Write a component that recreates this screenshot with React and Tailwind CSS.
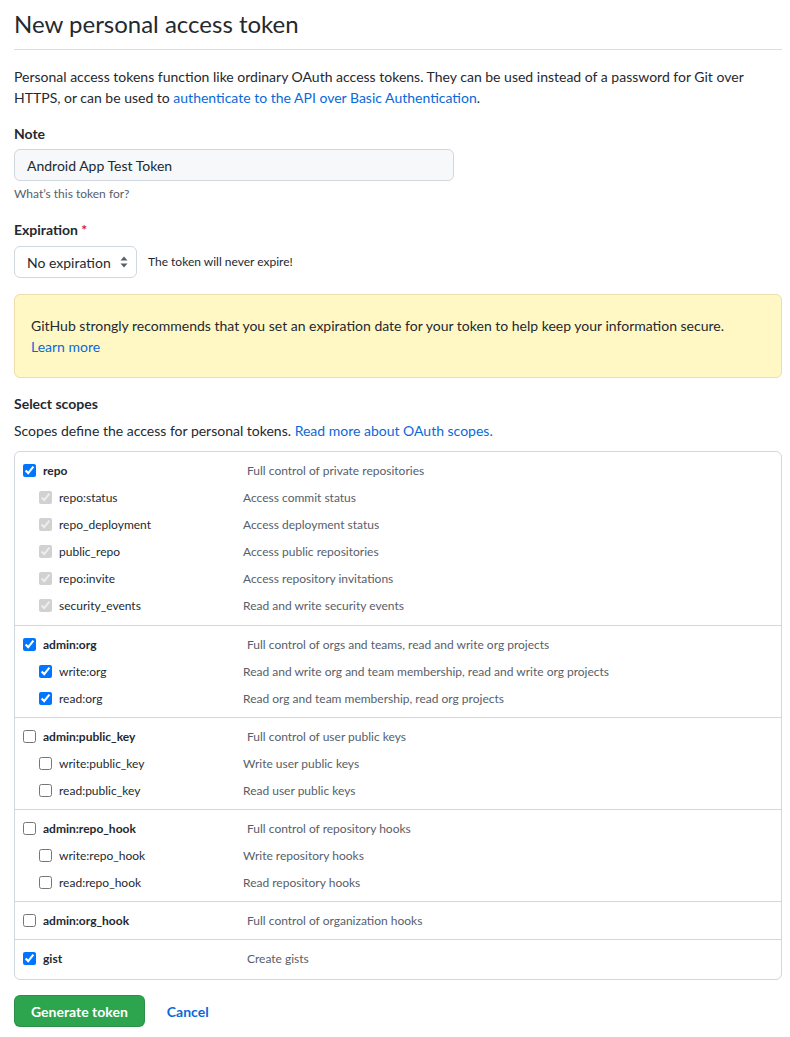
const scopeGroups = [
  {
    name: 'repo', desc: 'Full control of private repositories', checked: true,
    children: [
      ['repo:status', 'Access commit status'],
      ['repo_deployment', 'Access deployment status'],
      ['public_repo', 'Access public repositories'],
      ['repo:invite', 'Access repository invitations'],
      ['security_events', 'Read and write security events'],
    ],
    childState: 'disabled',
  },
  {
    name: 'admin:org', desc: 'Full control of orgs and teams, read and write org projects', checked: true,
    children: [
      ['write:org', 'Read and write org and team membership, read and write org projects'],
      ['read:org', 'Read org and team membership, read org projects'],
    ],
    childState: 'checked',
  },
  {
    name: 'admin:public_key', desc: 'Full control of user public keys', checked: false,
    children: [
      ['write:public_key', 'Write user public keys'],
      ['read:public_key', 'Read user public keys'],
    ],
    childState: 'off',
  },
  {
    name: 'admin:repo_hook', desc: 'Full control of repository hooks', checked: false,
    children: [
      ['write:repo_hook', 'Write repository hooks'],
      ['read:repo_hook', 'Read repository hooks'],
    ],
    childState: 'off',
  },
  { name: 'admin:org_hook', desc: 'Full control of organization hooks', checked: false, children: [] },
  { name: 'gist', desc: 'Create gists', checked: true, children: [] },
]

function ScopeGroup({ group, first, last }) {
  let cls = 'pt-[5px] pb-[5px] border-t border-[#d0d7de]'
  if (first) cls = 'pt-[5px] pb-[6px]'
  if (last) cls = 'pt-[5px] pb-[7px] border-t border-[#d0d7de]'
  return (
    <div className={cls}>
      <div className="flex items-center h-[27px] pl-[8px]">
        <input type="checkbox" defaultChecked={group.checked} className="m-0 w-[13px] h-[13px] shrink-0" />
        <span className="ml-[7px] w-[204px] shrink-0 font-bold text-[#24292f]">{group.name}</span>
        <span className="text-[#57606a]">{group.desc}</span>
      </div>
      {group.children.map(([name, desc]) => (
        <div key={name} className="flex items-center h-[27px] pl-[24px]">
          <input
            type="checkbox"
            defaultChecked={group.childState !== 'off'}
            disabled={group.childState === 'disabled'}
            className="m-0 w-[13px] h-[13px] shrink-0"
          />
          <span className="ml-[7px] w-[184px] shrink-0 text-[#24292f]">{name}</span>
          <span className="text-[#57606a]">{desc}</span>
        </div>
      ))}
    </div>
  )
}

export default function App() {
  return (
    <div className="min-h-screen bg-white font-['Lato',sans-serif] text-[14px] text-[#24292f]">
      <div className="ml-[14px] w-[768px]">
        {/* Header */}
        <div className="pt-[9px] pb-[10px] border-b border-[#d8dee4]">
          <h1 className="text-[24px] leading-[30px] font-normal">New personal access token</h1>
        </div>

        <p className="mt-[16px] leading-[21px]">
          <span>Personal access tokens function like ordinary OAuth access tokens. They can be used instead of a password for Git over HTTPS, or can be used to </span>
          <a className="text-[#0969da]">authenticate to the API over Basic Authentication</a>
          <span>.</span>
        </p>

        {/* Note */}
        <div className="mt-[15px]">
          <div className="font-bold leading-[21px]">Note</div>
          <div className="mt-[5px] w-[440px] h-[32px] flex items-center px-[12px] bg-[#f6f8fa] border border-[#d0d7de] rounded-[6px]">
            Android App Test Token
          </div>
          <div className="mt-[4px] text-[12px] leading-[18px] text-[#57606a]">What’s this token for?</div>
        </div>

        {/* Expiration */}
        <div className="mt-[16px]">
          <div className="font-bold leading-[21px]">
            Expiration <span className="text-[#cf222e]">*</span>
          </div>
          <div className="mt-[6px] flex items-center">
            <div className="w-[123px] h-[32px] flex items-center justify-between pl-[12px] pr-[8px] bg-white border border-[#d0d7de] rounded-[6px]">
              <span>No expiration</span>
              <svg width="8" height="12" viewBox="0 0 8 12" className="fill-[#57606a]">
                <path d="M4 0.5 L7.5 4.5 H0.5 Z" />
                <path d="M4 11.5 L7.5 7.5 H0.5 Z" />
              </svg>
            </div>
            <span className="ml-[11px] text-[12px]">The token will never expire!</span>
          </div>
        </div>

        {/* Warning flash */}
        <div className="mt-[16px] py-[20px] px-[16px] bg-[#fff8c5] border border-[#eedcab] rounded-[6px] leading-[21px]">
          GitHub strongly recommends that you set an expiration date for your token to help keep your information secure.
          <br />
          <a className="text-[#0969da]">Learn more</a>
        </div>

        {/* Scopes */}
        <div className="mt-[15px] font-bold leading-[21px]">Select scopes</div>
        <p className="mt-[6px] leading-[21px]">
          Scopes define the access for personal tokens. <a className="text-[#0969da]">Read more about OAuth scopes.</a>
        </p>

        <div className="mt-[10px] border border-[#d0d7de] rounded-[6px] text-[12px]">
          {scopeGroups.map((g, i) => (
            <ScopeGroup key={g.name} group={g} first={i === 0} last={i === scopeGroups.length - 1} />
          ))}
        </div>

        {/* Actions */}
        <div className="mt-[15px] flex items-center">
          <button className="h-[32px] px-[16px] bg-[#2da44e] border border-[rgba(27,31,36,0.15)] rounded-[6px] text-white font-bold">
            Generate token
          </button>
          <a className="ml-[22px] text-[#0969da] font-bold">Cancel</a>
        </div>
      </div>
    </div>
  )
}
